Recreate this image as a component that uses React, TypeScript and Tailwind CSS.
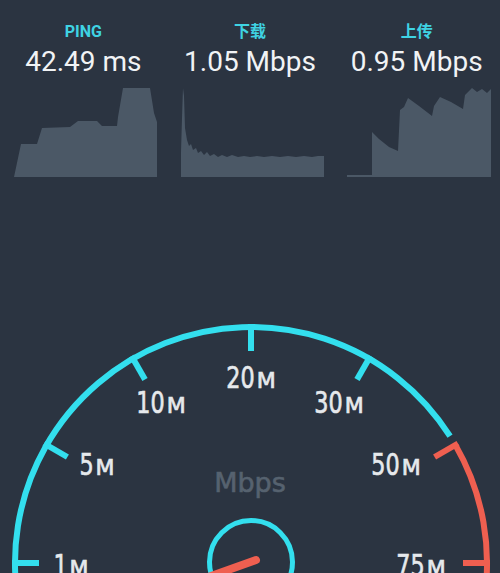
import React from "react";

/* Speed test screen — three stat columns with sparkline charts, and the
   big speedometer gauge underneath (cropped by the window). */

const CX = 251;
const CY = 563;
const R = 236;

const pt = (deg: number, r: number) => {
  const a = (deg * Math.PI) / 180;
  return [CX + r * Math.sin(a), CY - r * Math.cos(a)];
};

const arc = (from: number, to: number) => {
  const [x1, y1] = pt(from, R);
  const [x2, y2] = pt(to, R);
  const large = to - from > 180 ? 1 : 0;
  return `M${x1},${y1} A${R},${R} 0 ${large} 1 ${x2},${y2}`;
};

const stats = [
  {
    label: "PING",
    value: "42.49 ms",
    box: "14 88 144 90",
    path: "M14,177 L21,144 L37,144 L42,128 L70,127 L78,121 L97,121 L102,126 L117,126 L118,117 L123,88 L150,88 L154,113 L157,122 L157,177 Z",
  },
  {
    label: "下载",
    value: "1.05 Mbps",
    box: "181 88 144 90",
    path: "M181,177 L181,152 L182,118 L183,88 L184,96 L185,128 L187,140 L189,146 L191,144 L193,150 L196,148 L198,153 L201,151 L204,155 L207,152 L210,156 L214,154 L218,157 L222,155 L227,157 L232,155 L238,157 L244,156 L250,157 L257,156 L264,157 L272,156 L280,157 L288,156 L296,157 L304,156 L312,157 L318,156 L324,156 L324,177 Z",
  },
  {
    label: "上传",
    value: "0.95 Mbps",
    box: "348 88 144 90",
    path: "M348,177 L348,175 L373,175 L373,132 L380,139 L390,147 L399,151 L401,110 L405,107 L409,98 L420,106 L433,116 L435,106 L441,97 L452,102 L464,109 L466,95 L473,88 L478,92 L483,89 L488,93 L492,89 L492,177 Z",
  },
];

const ticks = [
  { deg: -90, d: "1", base: 576, cx: 71, red: false },
  { deg: -60, d: "5", base: 475, cx: 97, red: false },
  { deg: -30, d: "10", base: 413, cx: 161, red: false },
  { deg: 0, d: "20", base: 388, cx: 251, red: false },
  { deg: 30, d: "30", base: 413, cx: 339, red: false },
  { deg: 60, d: "50", base: 475, cx: 396, red: true },
  { deg: 90, d: "75", base: 576, cx: 421, red: true },
];

const CYAN = "#33dfee";
const RED = "#ef5f50";

function GaugeLabel({ d, cx, base }: { d: string; cx: number; base: number }) {
  const dw = d.length * 14.2;
  const total = dw + 2 + 19;
  const left = cx - total / 2;
  return (
    <g
      fill="#e6e9ec"
      stroke="#e6e9ec"
      strokeWidth={0.7}
      fontFamily="'DejaVu Sans', sans-serif"
    >
      <text transform={`translate(${left},${base}) scale(0.72,1)`} fontSize={31}>
        {d}
      </text>
      <text x={left + dw + 2} y={base} fontSize={22}>
        M
      </text>
    </g>
  );
}

export default function App() {
  return (
    <div className="h-[573px] w-[500px] overflow-hidden bg-[#2b3441] font-['Roboto',sans-serif]">
      <div className="grid grid-cols-3 pt-[23px]">
        {stats.map((s) => (
          <div key={s.label} className="flex flex-col">
            <div className="text-center text-[16px] font-bold leading-[18px] text-[#3fd3e3] font-['Roboto','Noto_Sans_CJK_SC',sans-serif]">
              {s.label}
            </div>
            <div className="mt-[5px] text-center text-[28px] leading-[32px] text-[#f1f3f5]">
              {s.value}
            </div>
            <svg
              className="ml-[14px] mt-[10px] block h-[90px] w-[144px]"
              viewBox={s.box}
            >
              <path d={s.path} fill="#4b5866" />
            </svg>
          </div>
        ))}
      </div>

      <svg className="block h-[395px] w-[500px]" viewBox="0 178 500 395">
        <path d={arc(-100, 57.5)} fill="none" stroke={CYAN} strokeWidth={6} />
        <path d={arc(60, 100)} fill="none" stroke={RED} strokeWidth={6} />
        {ticks.map((t) => {
          const [x1, y1] = pt(t.deg, R + 3);
          const [x2, y2] = pt(t.deg, R - 24);
          return (
            <line
              key={t.d}
              x1={x1}
              y1={y1}
              x2={x2}
              y2={y2}
              stroke={t.red ? RED : CYAN}
              strokeWidth={6}
            />
          );
        })}
        {ticks.map((t) => (
          <GaugeLabel key={t.d} d={t.d} cx={t.cx} base={t.base} />
        ))}
        <text
          x={250}
          y={492}
          textAnchor="middle"
          fontSize={27}
          fill="#56626f"
          stroke="#56626f"
          strokeWidth={0.6}
          fontFamily="'DejaVu Sans', sans-serif"
        >
          Mbps
        </text>
        <circle cx={251} cy={562} r={41.5} fill="none" stroke={CYAN} strokeWidth={5} />
        <line
          x1={256}
          y1={560}
          x2={200}
          y2={580}
          stroke={RED}
          strokeWidth={8}
          strokeLinecap="round"
        />
      </svg>
    </div>
  );
}
